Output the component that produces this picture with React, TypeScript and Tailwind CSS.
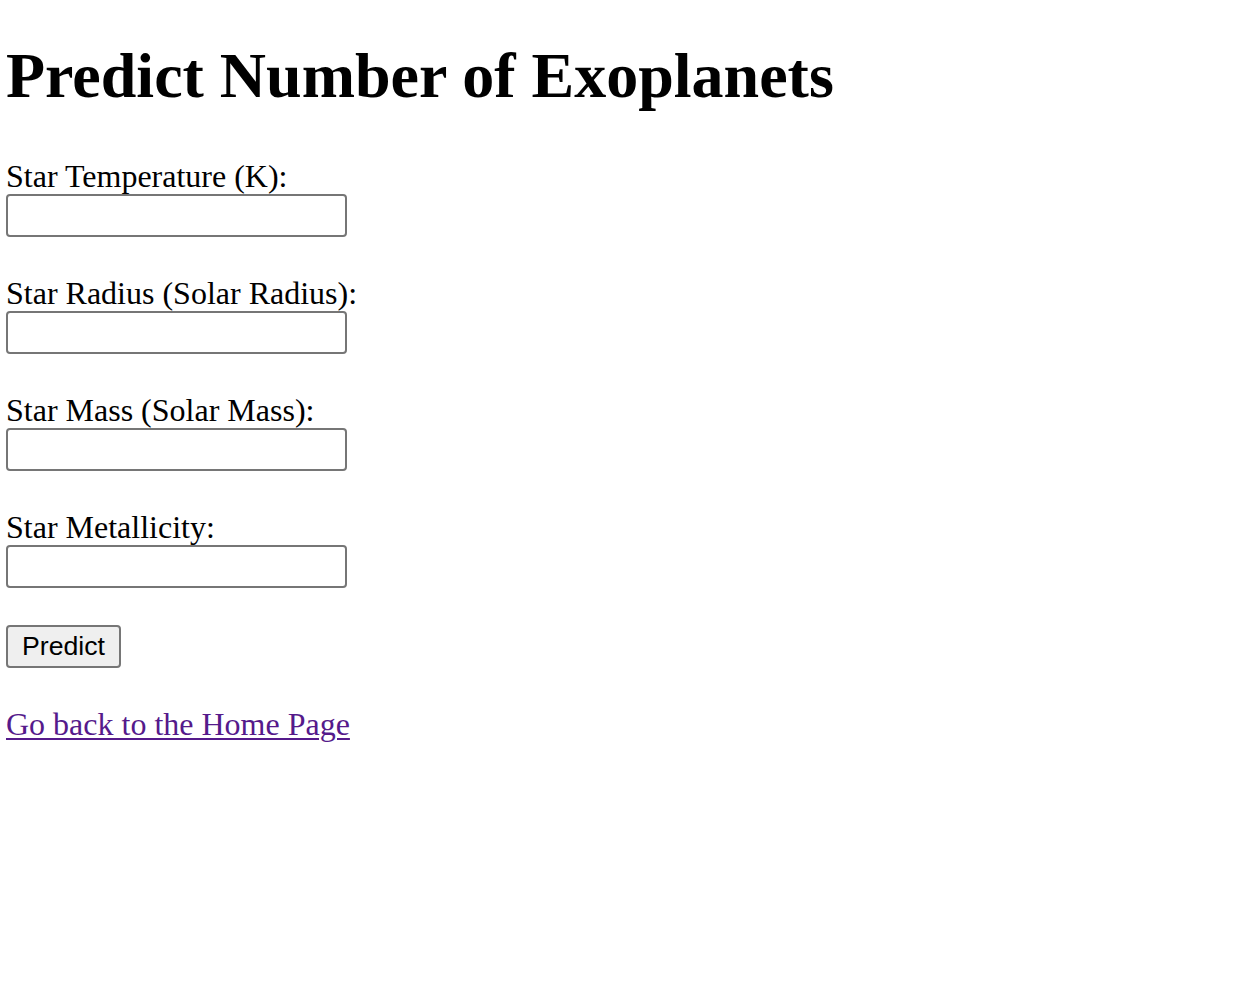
import React from "react";

function Field({ label }: { label: string }) {
  return (
    <div className="flex flex-col items-start">
      <label className="block pt-[3px] text-[32px] leading-[35px] text-black">{label}</label>
      <input
        type="text"
        className="block w-[341px] h-[43px] border-2 border-[#767676] rounded-[4px] bg-white outline-none"
      />
    </div>
  );
}

export default function App() {
  return (
    <div
      className="min-h-screen bg-white pl-[6px] pt-[39px] text-black"
      style={{ fontFamily: '"Liberation Serif", "Times New Roman", serif' }}
    >
      <h1 className="text-[64px] leading-[74px] font-bold">Predict Number of Exoplanets</h1>
      <div className="mt-[43px] flex flex-col gap-[36px]">
        <Field label="Star Temperature (K):" />
        <Field label="Star Radius (Solar Radius):" />
        <Field label="Star Mass (Solar Mass):" />
        <Field label="Star Metallicity:" />
      </div>
      <button
        type="button"
        className="mt-[37px] block w-[115px] h-[43px] bg-[#efefef] border-2 border-[#767676] rounded-[4px] text-[26.67px] leading-none text-black"
        style={{ fontFamily: '"Liberation Sans", Arial, sans-serif' }}
      >
        Predict
      </button>
      <a
        href="#"
        className="mt-[38px] inline-block text-[32px] leading-[37px] text-[#551a8b] underline decoration-2 underline-offset-[3px]"
      >
        Go back to the Home Page
      </a>
    </div>
  );
}
